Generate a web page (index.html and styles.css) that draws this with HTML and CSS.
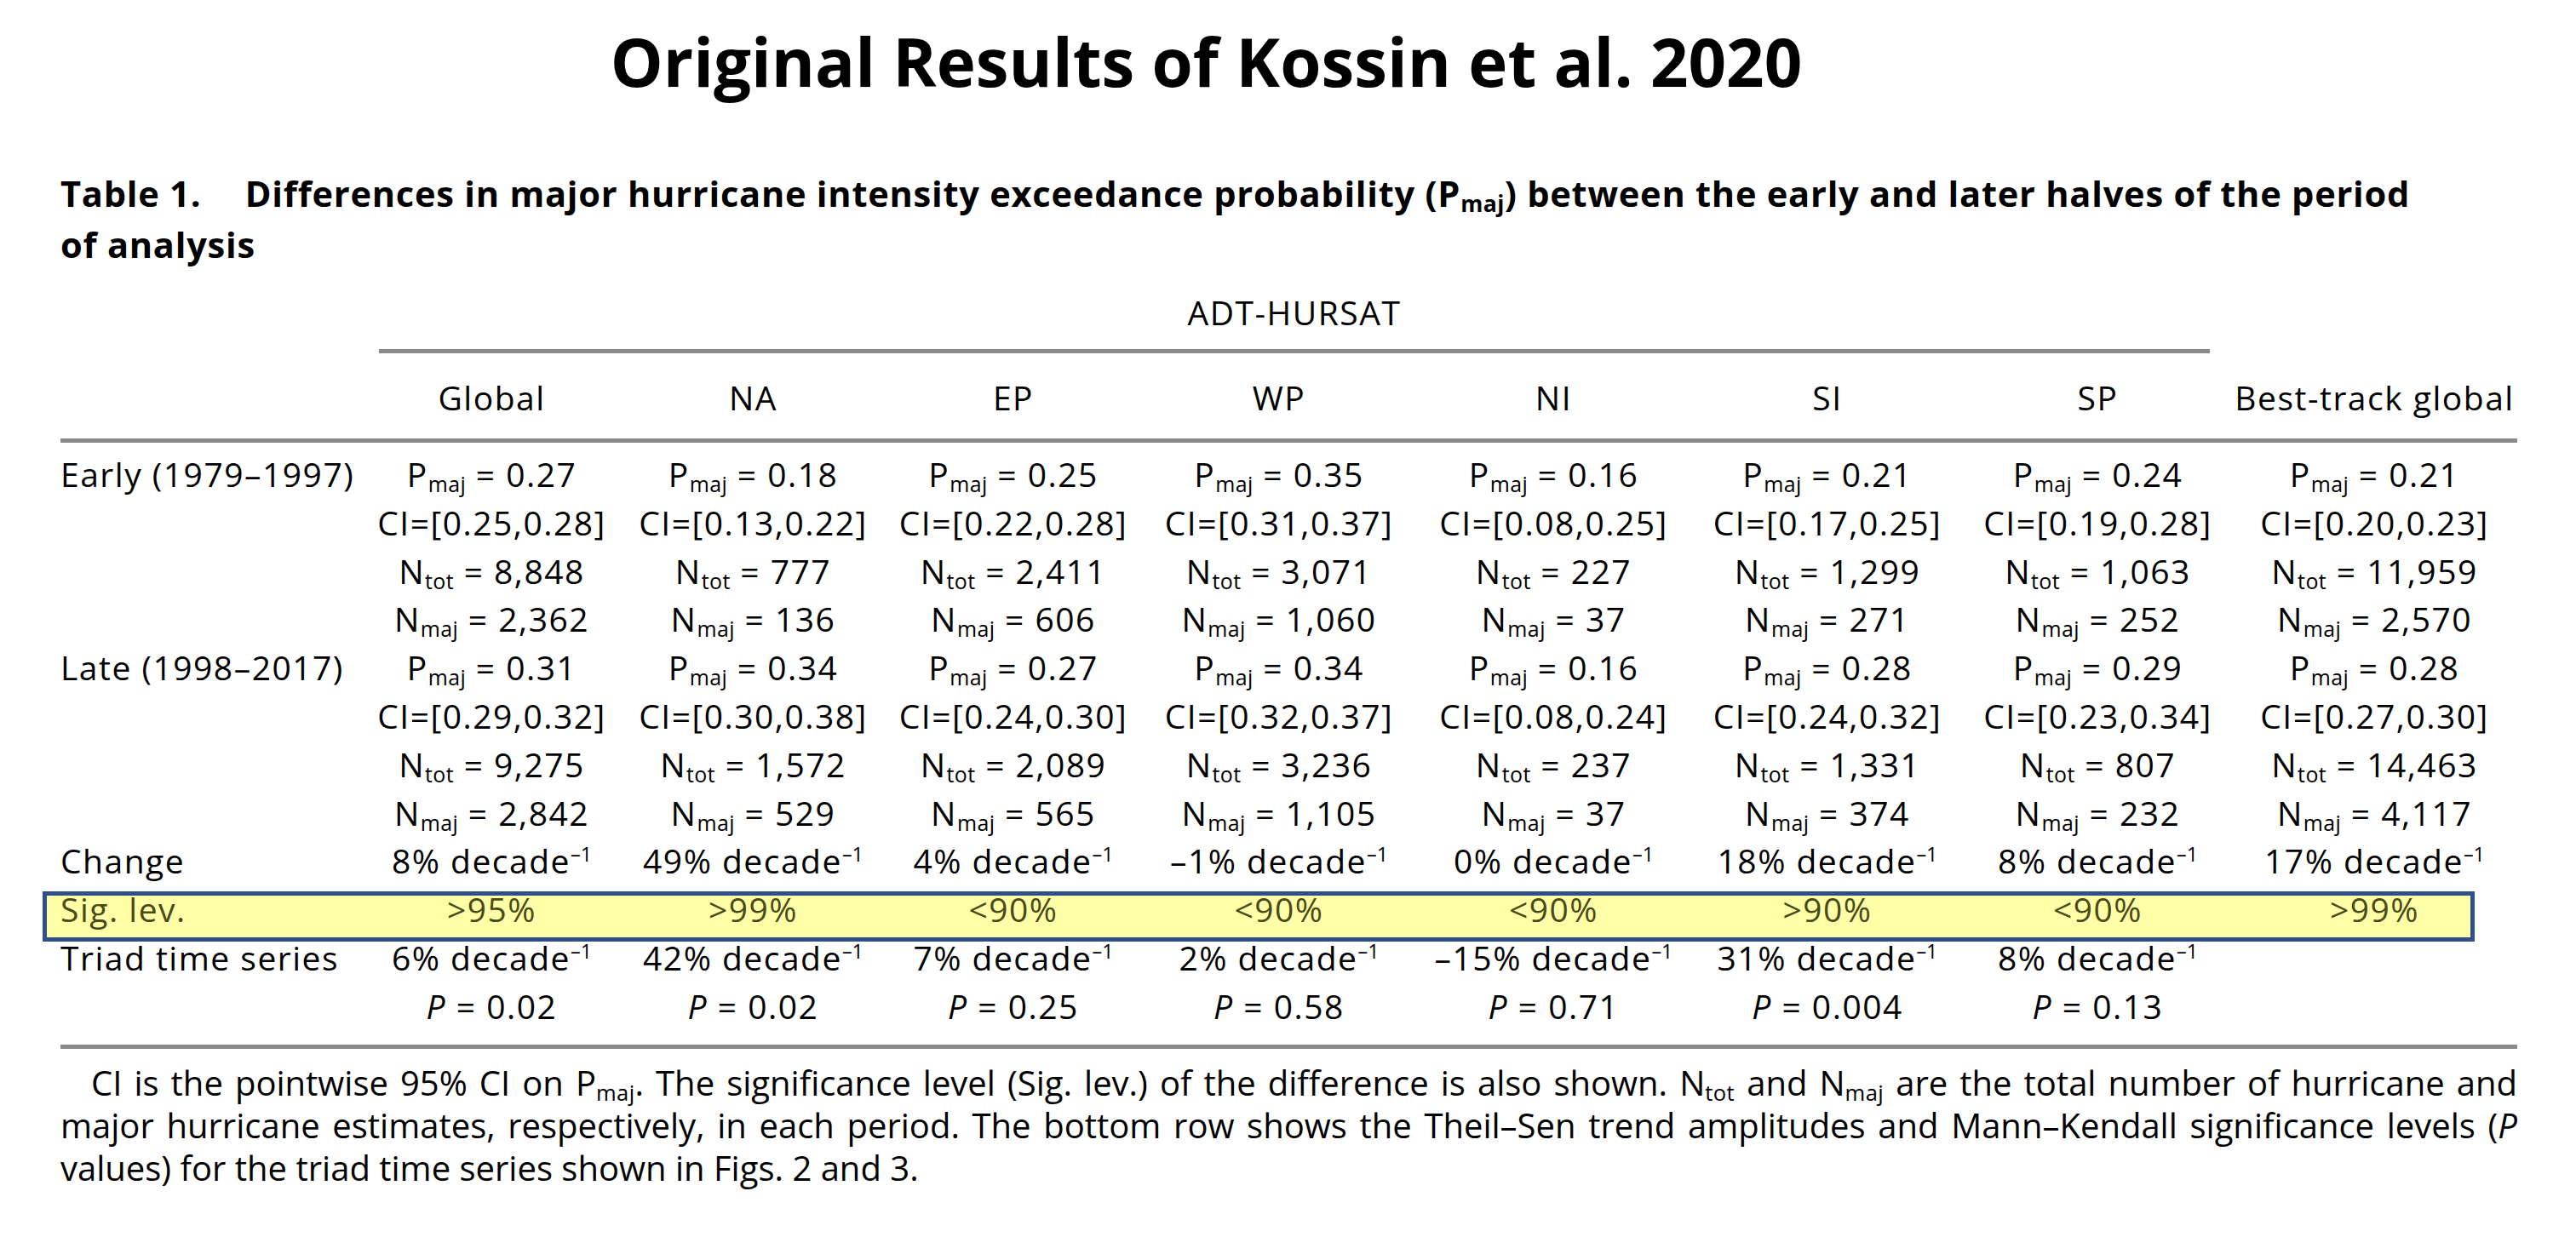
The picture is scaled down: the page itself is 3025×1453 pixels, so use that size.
FILE: index.html
```html
<!DOCTYPE html>
<html lang="en">
<head>
<meta charset="utf-8">
<title>Original Results of Kossin et al. 2020</title>
<link rel="stylesheet" href="styles.css">
</head>
<body>
<h1 class="title">Original Results of Kossin et al. 2020</h1>
<p class="caption"><span class="tno">Table 1.</span> Differences in major hurricane intensity exceedance probability (P<sub>maj</sub>) between the early and later halves of the period<br>of analysis</p>

<div class="tbl">
  <div class="row group"><div class="adt">ADT-HURSAT</div></div>
  <div class="row head">
    <div class="lbl"></div><div>Global</div><div>NA</div><div>EP</div><div>WP</div><div>NI</div><div>SI</div><div>SP</div><div>Best-track global</div>
  </div>
  <div class="body">
    <div class="row">
      <div class="lbl">Early (1979–1997)</div>
      <div>P<sub>maj</sub> = 0.27</div><div>P<sub>maj</sub> = 0.18</div><div>P<sub>maj</sub> = 0.25</div><div>P<sub>maj</sub> = 0.35</div><div>P<sub>maj</sub> = 0.16</div><div>P<sub>maj</sub> = 0.21</div><div>P<sub>maj</sub> = 0.24</div><div>P<sub>maj</sub> = 0.21</div>
    </div>
    <div class="row">
      <div class="lbl"></div>
      <div>CI=[0.25,0.28]</div><div>CI=[0.13,0.22]</div><div>CI=[0.22,0.28]</div><div>CI=[0.31,0.37]</div><div>CI=[0.08,0.25]</div><div>CI=[0.17,0.25]</div><div>CI=[0.19,0.28]</div><div>CI=[0.20,0.23]</div>
    </div>
    <div class="row">
      <div class="lbl"></div>
      <div>N<sub>tot</sub> = 8,848</div><div>N<sub>tot</sub> = 777</div><div>N<sub>tot</sub> = 2,411</div><div>N<sub>tot</sub> = 3,071</div><div>N<sub>tot</sub> = 227</div><div>N<sub>tot</sub> = 1,299</div><div>N<sub>tot</sub> = 1,063</div><div>N<sub>tot</sub> = 11,959</div>
    </div>
    <div class="row">
      <div class="lbl"></div>
      <div>N<sub>maj</sub> = 2,362</div><div>N<sub>maj</sub> = 136</div><div>N<sub>maj</sub> = 606</div><div>N<sub>maj</sub> = 1,060</div><div>N<sub>maj</sub> = 37</div><div>N<sub>maj</sub> = 271</div><div>N<sub>maj</sub> = 252</div><div>N<sub>maj</sub> = 2,570</div>
    </div>
    <div class="row">
      <div class="lbl">Late (1998–2017)</div>
      <div>P<sub>maj</sub> = 0.31</div><div>P<sub>maj</sub> = 0.34</div><div>P<sub>maj</sub> = 0.27</div><div>P<sub>maj</sub> = 0.34</div><div>P<sub>maj</sub> = 0.16</div><div>P<sub>maj</sub> = 0.28</div><div>P<sub>maj</sub> = 0.29</div><div>P<sub>maj</sub> = 0.28</div>
    </div>
    <div class="row">
      <div class="lbl"></div>
      <div>CI=[0.29,0.32]</div><div>CI=[0.30,0.38]</div><div>CI=[0.24,0.30]</div><div>CI=[0.32,0.37]</div><div>CI=[0.08,0.24]</div><div>CI=[0.24,0.32]</div><div>CI=[0.23,0.34]</div><div>CI=[0.27,0.30]</div>
    </div>
    <div class="row">
      <div class="lbl"></div>
      <div>N<sub>tot</sub> = 9,275</div><div>N<sub>tot</sub> = 1,572</div><div>N<sub>tot</sub> = 2,089</div><div>N<sub>tot</sub> = 3,236</div><div>N<sub>tot</sub> = 237</div><div>N<sub>tot</sub> = 1,331</div><div>N<sub>tot</sub> = 807</div><div>N<sub>tot</sub> = 14,463</div>
    </div>
    <div class="row">
      <div class="lbl"></div>
      <div>N<sub>maj</sub> = 2,842</div><div>N<sub>maj</sub> = 529</div><div>N<sub>maj</sub> = 565</div><div>N<sub>maj</sub> = 1,105</div><div>N<sub>maj</sub> = 37</div><div>N<sub>maj</sub> = 374</div><div>N<sub>maj</sub> = 232</div><div>N<sub>maj</sub> = 4,117</div>
    </div>
    <div class="row">
      <div class="lbl">Change</div>
      <div>8% decade<sup>–1</sup></div><div>49% decade<sup>–1</sup></div><div>4% decade<sup>–1</sup></div><div>–1% decade<sup>–1</sup></div><div>0% decade<sup>–1</sup></div><div>18% decade<sup>–1</sup></div><div>8% decade<sup>–1</sup></div><div>17% decade<sup>–1</sup></div>
    </div>
    <div class="row sig">
      <div class="lbl">Sig. lev.</div>
      <div>&gt;95%</div><div>&gt;99%</div><div>&lt;90%</div><div>&lt;90%</div><div>&lt;90%</div><div>&gt;90%</div><div>&lt;90%</div><div>&gt;99%</div>
    </div>
    <div class="row">
      <div class="lbl">Triad time series</div>
      <div>6% decade<sup>–1</sup></div><div>42% decade<sup>–1</sup></div><div>7% decade<sup>–1</sup></div><div>2% decade<sup>–1</sup></div><div>–15% decade<sup>–1</sup></div><div>31% decade<sup>–1</sup></div><div>8% decade<sup>–1</sup></div><div></div>
    </div>
    <div class="row">
      <div class="lbl"></div>
      <div><i>P</i> = 0.02</div><div><i>P</i> = 0.02</div><div><i>P</i> = 0.25</div><div><i>P</i> = 0.58</div><div><i>P</i> = 0.71</div><div><i>P</i> = 0.004</div><div><i>P</i> = 0.13</div><div></div>
    </div>
  </div>
</div>

<div class="foot">
  <span class="fl first">CI is the pointwise 95% CI on P<sub>maj</sub>. The significance level (Sig. lev.) of the difference is also shown. N<sub>tot</sub> and N<sub>maj</sub> are the total number of hurricane and</span>
  <span class="fl">major hurricane estimates, respectively, in each period. The bottom row shows the Theil–Sen trend amplitudes and Mann–Kendall significance levels (<i>P</i></span>
  <span class="fl last">values) for the triad time series shown in Figs. 2 and 3.</span>
</div>
</body>
</html>
```

FILE: styles.css
```css
html, body {
  margin: 0;
  padding: 0;
  background: #ffffff;
  color: #000000;
  font-family: "Open Sans", "Liberation Sans", sans-serif;
}

.title {
  margin: 0;
  padding: 26px 192px 0 0;
  font-size: 78px;
  font-weight: 700;
  line-height: 1.2;
  text-align: center;
}

.caption {
  margin: 77.5px 0 0 71px;
  font-size: 41.6px;
  font-weight: 700;
  line-height: 60px;
  letter-spacing: 0.75px;
  white-space: nowrap;
}

.tno {
  margin-right: 40px;
}

sub {
  font-size: 0.64em;
  vertical-align: -0.24em;
  line-height: 0;
  letter-spacing: 0.4px;
}

sup {
  font-size: 0.6em;
  vertical-align: 0.62em;
  line-height: 0;
  letter-spacing: 0;
}

.tbl {
  margin: 22px 0 0 71px;
  width: 2885px;
  font-size: 39px;
  letter-spacing: 1.5px;
}

.row {
  display: grid;
  grid-template-columns: 352px 309px 305px 306px 318px 327px 316px 319px 331px;
  height: 56.8px;
  line-height: 56.8px;
  white-space: nowrap;
  text-align: center;
}

.row .lbl {
  text-align: left;
}

.group .adt {
  grid-column: 2 / 9;
  margin: 0 28px 0 22px;
  padding-bottom: 14.5px;
  border-bottom: 5px solid #8a8a8a;
}

.group {
  height: auto;
}

.head {
  margin-top: 23.7px;
}

.body {
  margin-top: 18.7px;
  border-top: 5px solid #8a8a8a;
  border-bottom: 5px solid #8a8a8a;
  padding: 9.5px 0 16px;
}

.sig {
  position: relative;
  isolation: isolate;
  color: #4a4a16;
}

.sig::before {
  content: "";
  position: absolute;
  left: -21px;
  right: 50px;
  top: 7px;
  bottom: -9px;
  background: #ffffa8;
  border: 5px solid #2f4f8b;
  z-index: -1;
}

.foot {
  margin: 15.4px 0 0 71px;
  width: 2885px;
  font-size: 40px;
  line-height: 50px;
  letter-spacing: 0;
}

.fl {
  display: block;
  text-align: justify;
  text-align-last: justify;
  white-space: nowrap;
}

.fl.first {
  padding-left: 36px;
}

.fl.last {
  text-align-last: left;
}
```
